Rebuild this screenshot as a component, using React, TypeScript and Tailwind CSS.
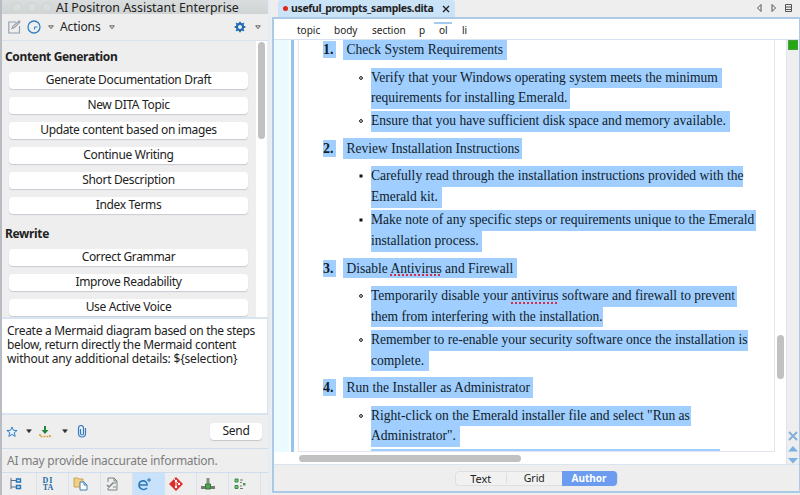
import type { ReactNode } from "react";

const UI = "font-['Noto_Sans','Open_Sans',sans-serif]";

function Caret({ solid = false }: { solid?: boolean }) {
  return (
    <svg width="6" height="5" viewBox="0 0 6 5" className="shrink-0">
      <path d="M.7 .8h4.6L3 3.7z" fill={solid ? "#222" : "#e5e5e5"} stroke="#444" strokeWidth=".8" />
    </svg>
  );
}

function Action({ children }: { children: ReactNode }) {
  return (
    <div className="flex h-[17px] w-[239px] shrink-0 items-center justify-center rounded-[4px] bg-white pb-[2px] shadow-[0_1px_1px_#c9c9d2]">
      <span className="whitespace-nowrap text-[12px] leading-none tracking-[-0.34px]">{children}</span>
    </div>
  );
}

function Line({ children, w }: { children: ReactNode; w: string }) {
  return (
    <div className={`h-[20.7px] whitespace-nowrap bg-[#a0cfff] leading-[20.5px] ${w}`}>{children}</div>
  );
}

function Item({ children, hollow }: { children: ReactNode; hollow: boolean }) {
  return (
    <li className="flex">
      <span className="mr-[8px] mt-[8px] flex w-[4px] shrink-0">
        {hollow ? (
          <svg width="4" height="4" viewBox="0 0 4 4"><circle cx="2" cy="2" r="1.4" fill="#fff" stroke="#111" strokeWidth="1" /></svg>
        ) : (
          <svg width="4" height="4" viewBox="0 0 4 4"><path d="M.5 .5h3v3h-3z" fill="#111" /></svg>
        )}
      </span>
      <div>{children}</div>
    </li>
  );
}

function Step({ n, title, w, children }: { n: number; title: ReactNode; w: string; children: ReactNode }) {
  return (
    <section className="mb-[6px] shrink-0">
      <div className="flex pl-[24px]">
        <b className="mr-[7px] mt-[2px] h-[17px] w-[13px] bg-[#a0cfff] text-[14px] leading-[17px]">{n}.</b>
        <div className={`h-[20.5px] whitespace-nowrap bg-[#a0cfff] pl-[3.5px] leading-[22px] ${w}`}>{title}</div>
      </div>
      <ul className="mt-[7.8px] flex flex-col gap-[2.5px] pl-[60px]">{children}</ul>
    </section>
  );
}

function Typo({ children }: { children: ReactNode }) {
  return <span className="underline decoration-[#d03050] decoration-dotted decoration-[1.5px] underline-offset-[2px]">{children}</span>;
}

function Tab({ children, active = false }: { children: ReactNode; active?: boolean }) {
  return (
    <div className={`flex h-[22px] w-[32px] shrink-0 items-center justify-center border-r pr-[9px] ${active ? "border-[#c7e2fa] bg-[#c7e2fa]" : "border-[#dbe2ef]"}`}>
      {children}
    </div>
  );
}

function Assistant() {
  return (
    <aside className="flex h-[495px] w-[268px] shrink-0 flex-col border-l-2 border-[#b9bcc2] bg-[#eeeeee]">
      <header className="flex h-[14px] shrink-0 items-center bg-gradient-to-b from-[#dadddd] to-[#d1d4d4] pl-[10px]">
        <span className="mr-[5px] h-[10px] w-[10px] shrink-0 rounded-full border border-[#cfd3d2] bg-[#d9dddb]" />
        <span className="mr-[5px] h-[10px] w-[10px] shrink-0 rounded-full border border-[#cfd3d2] bg-[#d9dddb]" />
        <span className="mr-[4px] h-[10px] w-[10px] shrink-0 rounded-full border border-[#cfd3d2] bg-[#d9dddb]" />
        <span className="whitespace-nowrap pt-[2px] text-[12.4px] leading-[14px]">AI Positron Assistant Enterprise</span>
      </header>
      <div className="flex h-[27px] shrink-0 items-center border-b border-[#d9e2ee] pl-[6px] pr-[7px]">
        <svg width="13" height="14" viewBox="0 0 13 14" fill="none" stroke="#929dab" strokeWidth="1.1">
          <path d="M8 2H.8v11h10.7V6M4 8.5 5 6l6-5 1 1-5.5 5.5z" />
        </svg>
        <svg className="ml-[6px]" width="14" height="14" viewBox="0 0 14 14" fill="none" stroke="#347fc3" strokeWidth="1.3">
          <circle cx="7" cy="7" r="6" /><path d="M7.5 9.500V7h3" strokeWidth="1" />
        </svg>
        <div className="ml-[7px] flex"><Caret /></div>
        <span className="ml-[6px] w-[44px] pb-px text-[12px] leading-none tracking-[-0.1px]">Actions</span>
        <div className="ml-[5px] flex"><Caret /></div>
        <svg className="ml-auto" width="12" height="12" viewBox="0 0 12 12">
          <circle cx="6" cy="6" r="3.1" fill="none" stroke="#246eb4" strokeWidth="2.2" />
          <path d="M6 .7v2M6 9.3v2M.7 6h2M9.3 6h2M2.2 2.2l1.4 1.4M8.4 8.4l1.4 1.4M9.8 2.2 8.4 3.6M3.6 8.4 2.2 9.8" stroke="#246eb4" strokeWidth="1.8" />
        </svg>
        <div className="ml-[9px] flex"><Caret /></div>
      </div>
      <div className="flex h-[276px] shrink-0 overflow-hidden">
        <div className="flex w-[254px] flex-col gap-[8px] pl-[7px]">
          <h2 className="-ml-[4px] mt-[9px] h-[14px] shrink-0 text-[12px] font-bold leading-[14px] tracking-[-0.35px]">Content Generation</h2>
          <Action>Generate Documentation Draft</Action>
          <Action>New DITA Topic</Action>
          <Action>Update content based on images</Action>
          <Action>Continue Writing</Action>
          <Action>Short Description</Action>
          <Action>Index Terms</Action>
          <h2 className="-ml-[4px] mt-[5px] h-[14px] shrink-0 text-[12px] font-bold leading-[14px] tracking-[-0.35px]">Rewrite</h2>
          <Action>Correct Grammar</Action>
          <Action>Improve Readability</Action>
          <Action>Use Active Voice</Action>
        </div>
        <div className="flex w-[11px] justify-center bg-white pt-px">
          <div className="h-[97px] w-[7px] rounded-full bg-[#c1c1c1]" />
        </div>
      </div>
      <div className="h-[98px] shrink-0 border-y-2 border-r border-[#d8e4f0] bg-white pl-[5px] pt-[5px] text-[12px] leading-[13.8px] tracking-[-0.3px]">
        <p className="whitespace-nowrap">Create a Mermaid diagram based on the steps</p>
        <p className="whitespace-nowrap">below, return directly the Mermaid content</p>
        <p className="whitespace-nowrap tracking-[-0.2px]">without any additional details: $&#123;selection&#125;</p>
      </div>
      <div className="flex h-[34px] shrink-0 items-center border-b border-[#cfdced] pl-[4px] pr-[6px]">
        <svg width="12" height="12" viewBox="0 0 12 12"><path d="m6 1 1.4 3.3 3.7.2-2.9 2.3 1 3.6L6 8.4l-3.2 2 1-3.6L.9 4.5l3.7-.2z" fill="#e8f3ff" stroke="#347fc3" /></svg>
        <div className="ml-[8px] flex"><Caret solid /></div>
        <svg className="ml-[7px]" width="12" height="12" viewBox="0 0 12 12"><path d="M5 0h2v4h2.5L6 8 2.500 4H5z" fill="#23833d" /><path d="M1 8v2.500h10V8" fill="none" stroke="#d8a33c" strokeWidth="1.7" strokeDasharray="2 1" /></svg>
        <div className="ml-[11px] flex"><Caret solid /></div>
        <svg className="ml-[9px]" width="10" height="13" viewBox="0 0 10 13" fill="none" stroke="#347fc3" strokeWidth="1.2"><path d="M3.500 4v4.500a1.500 1.500 0 0 0 3 0V3a2.200 2.200 0 0 0-5 0v5.500a3.500 3.500 0 0 0 7 0V3" /></svg>
        <div className="ml-auto flex h-[17px] w-[52px] items-center justify-center rounded-[4px] bg-white pb-px text-[12px] leading-none tracking-[-0.3px] shadow-[0_1px_1px_#c5c5ca]">Send</div>
      </div>
      <p className="flex h-[24px] shrink-0 items-center whitespace-nowrap border-b border-[#cfdced] pl-[5px] text-[12px] tracking-[-0.24px] text-[#7d7d7d]">AI may provide inaccurate information.</p>
      <nav className="flex h-[22px] shrink-0 pl-[3px]">
        <Tab><svg width="12" height="12" viewBox="0 0 12 12" fill="none"><path d="M1 0v11M1 2.500h5M1 9h5" stroke="#596c80" /><path d="M6.500 1h4v3h-4zM6.500 7.500h4v3h-4z" fill="#dcecff" stroke="#2677b7" strokeWidth="1.400" /></svg></Tab>
        <Tab><div className="flex w-[12px] flex-col items-center font-['Liberation_Serif',serif] text-[8px] font-bold leading-[7px] text-[#276b9e]"><span className="tracking-[1px]">DI</span><span>TA</span></div></Tab>
        <Tab><svg width="15" height="14" viewBox="0 0 15 14"><path d="M1 2V1h4l1 1h4v8H1z" fill="#efcf83" stroke="#c6a455" /><path d="M7 5h4l3 3v5H7z" fill="#fff" stroke="#387eb8" /><path d="M11 5v3h3" fill="none" stroke="#387eb8" /></svg></Tab>
        <Tab><svg width="13" height="14" viewBox="0 0 13 14" fill="none" stroke="#7b8283"><path d="M2 5V1h6l3 3v9H2v-2M8 1v3h3M6 6h4M7 10h3" /><path d="m1 8 2 2 4-4" strokeWidth="1.500" /></svg></Tab>
        <Tab active><svg width="15" height="14" viewBox="0 0 15 14" fill="none" stroke="#2b78b9"><path d="M2 8h8c0-6-8-5-8 0 0 4 5 6 8 3" strokeWidth="1.600" /><path d="M12 1v4M10 3h4" /></svg></Tab>
        <Tab><svg width="14" height="14" viewBox="0 0 14 14"><path d="m7 0 7 7-7 7-7-7z" fill="#df2d28" /><path d="m5 2 2 2v6M7 4l3 3" fill="none" stroke="#fff" /><circle cx="7" cy="4" r="1.200" fill="#fff" /><circle cx="7" cy="10" r="1.200" fill="#fff" /><circle cx="10" cy="7" r="1.200" fill="#fff" /></svg></Tab>
        <Tab><svg width="14" height="12" viewBox="0 0 14 12"><path d="M5.500 0h3v6h-3z" fill="#80937d" /><path d="M0 8h14v3H0z" fill="#777" /><path d="M4.500 6h5v5h-5z" fill="#4ca64b" stroke="#377642" /></svg></Tab>
        <Tab><svg width="13" height="12" viewBox="0 0 13 12"><path d="M1 1h3v3H1zM1 7.500h3v3H1z" fill="#72c66e" stroke="#398848" /><path d="M6 2h3M6 4.500h2M6 8h2M6 10.500h3" stroke="#777" /><path d="M9 5h2.500v2.500H9z" fill="#4e9b52" /></svg></Tab>
      </nav>
    </aside>
  );
}

function Editor() {
  return (
    <main className="ml-[2px] flex h-[495px] w-[528px] shrink-0 flex-col">
      <div className="flex h-[17px] shrink-0 items-center pl-[6px] pr-[7px]">
        <div className="flex h-[17px] w-[177px] items-center rounded-t-[3px] bg-[#cbe3f7] pl-[5px]">
          <span className="h-[5px] w-[5px] shrink-0 rounded-full bg-[#df281b]" />
          <b className="ml-[3px] w-[143px] shrink-0 whitespace-nowrap pb-[2px] text-[10.5px] leading-[14px] tracking-[-0.36px]">useful_prompts_samples.dita</b>
          <svg className="ml-[8px] shrink-0" width="8" height="8" viewBox="0 0 8 8"><path d="m1 1 6 6M7 1 1 7" stroke="#222" strokeWidth="1.400" /></svg>
        </div>
        <svg className="mb-[2px] ml-auto" width="37" height="10" viewBox="0 0 37 10" fill="none" stroke="#555"><path d="M5 1.500v7L1.500 5zM16 1.500v7L19.500 5zM29.500 1.500h6v7h-6zM29 4h7M29 6.500h7" /></svg>
      </div>
      <div className="flex h-[476px] flex-col border-2 border-r border-[#acc9e5] bg-white">
        <div className="flex h-[21px] shrink-0 items-start border-b border-[#d9e2f2] pl-[14px] text-[10px] leading-[14px]">
          <span className="ml-[9px] mt-[4px] w-[37px]">topic</span>
          <span className="mt-[4px] w-[38px]">body</span>
          <span className="mt-[4px] w-[47px]">section</span>
          <span className="mt-[4px] w-[15px]">p</span>
          <span className="mt-[3px] w-[18px] border-t-2 border-[#a4cbed] pl-[5px] leading-[12px]">ol</span>
          <span className="ml-[10px] mt-[4px]">li</span>
        </div>
        <div className="flex h-[412px] shrink-0">
          <div className="mr-[4px] w-[20px] shrink-0 border-r-[3px] border-[#94c5ef] bg-[#ebfaff] shadow-[inset_-2px_0_white]" />
          <article className="flex w-[477px] shrink-0 flex-col overflow-hidden border-x border-b border-[#e1e5ef] font-['Liberation_Serif',serif] text-[13.56px] text-[#101c2b]">
            <div className="-mt-[0.7px]">
              <Step n={1} title="Check System Requirements" w="w-[164px]">
                <Item hollow><Line w="w-[350.5px]">Verify that your Windows operating system meets the minimum</Line><Line w="w-[198.5px]">requirements for installing Emerald.</Line></Item>
                <Item hollow><Line w="w-[359px]">Ensure that you have sufficient disk space and memory available.</Line></Item>
              </Step>
              <Step n={2} title="Review Installation Instructions" w="w-[178.5px]">
                <Item hollow={false}><Line w="w-[372px]">Carefully read through the installation instructions provided with the</Line><Line w="w-[71px]">Emerald kit.</Line></Item>
                <Item hollow={false}><Line w="w-[385px]">Make note of any specific steps or requirements unique to the Emerald</Line><Line w="w-[111px]">installation process.</Line></Item>
              </Step>
              <Step n={3} title={<>Disable <Typo>Antivirus</Typo> and Firewall</>} w="w-[174px]">
                <Item hollow><Line w="w-[366px]">Temporarily disable your <Typo>antivirus</Typo> software and firewall to prevent</Line><Line w="w-[232px]">them from interfering with the installation.</Line></Item>
                <Item hollow><Line w="w-[377px]">Remember to re-enable your security software once the installation is</Line><Line w="w-[57.5px]">complete.</Line></Item>
              </Step>
              <Step n={4} title="Run the Installer as Administrator" w="w-[189.5px]">
                <Item hollow><Line w="w-[320px]">Right-click on the Emerald installer file and select "Run as</Line><Line w="w-[89px]">Administrator".</Line></Item>
                <li className="ml-[12px] h-[21px] w-[349px] bg-[#a0cfff]" />
              </Step>
            </div>
          </article>
          <div className="-mb-[12px] flex w-[12px] shrink-0 justify-center border-r border-[#dce4f2] pt-[295px]">
            <div className="h-[44px] w-[7px] rounded-full bg-[#c1c1c1]" />
          </div>
          <div className="-mb-[13px] flex w-[12px] shrink-0 flex-col items-center bg-[#eeeeee]">
            <div className="h-[10px] w-[10px] shrink-0 border border-[#4b9a42] bg-[#22a90e]" />
            <svg className="mt-auto shrink-0" width="10" height="34" viewBox="0 0 10 34">
              <path d="m1 1 8 8M9 1 1 9" stroke="#86afd5" strokeWidth="2" />
              <path d="M0 20.500h10l-5-5.500zM0 27h10l-5 5.500z" fill="#79b1e3" />
            </svg>
          </div>
        </div>
        <div className="flex h-[13px] shrink-0 items-center border-b border-[#dce4f2] pl-[25px]">
          <div className="h-[7px] w-[222px] rounded-full bg-[#c1c1c1]" />
        </div>
        <footer className="flex h-[26px] shrink-0 items-center justify-center bg-[#eeeeee] pr-[1px] text-[11px] leading-none">
          <div className="flex h-[15px] w-[163px] items-center rounded-[4px] border border-[#dfdfdf] bg-[#f1f1f1]">
            <span className="w-[51px] text-center">Text</span>
            <span className="w-[56px] border-l border-[#dedede] text-center text-[10.5px]">Grid</span>
            <span className="flex h-[15px] w-[55px] shrink-0 items-center justify-center rounded-r-[4px] bg-[#6c9cef] text-[10px] font-bold text-white">Author</span>
          </div>
        </footer>
      </div>
    </main>
  );
}

export default function App() {
  return (
    <div className={`flex h-[495px] w-[800px] overflow-hidden bg-[#eeeeee] text-[#222] ${UI}`}>
      <Assistant />
      <div className="w-[2px] shrink-0 bg-[#e2edf8]" />
      <Editor />
    </div>
  );
}
